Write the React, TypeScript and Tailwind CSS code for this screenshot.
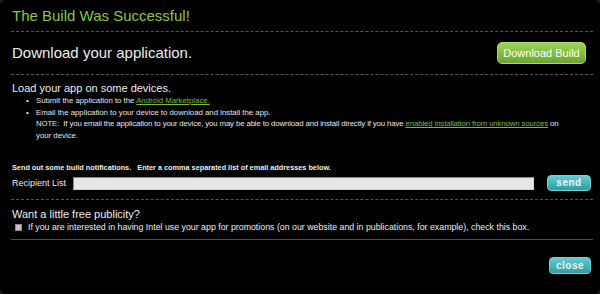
import React from 'react';

const font = { fontFamily: '"Liberation Sans", Arial, sans-serif' };

const Rule = ({ solid = false }: { solid?: boolean }) => (
  <div className={`h-0 border-t ${solid ? 'border-solid border-[#4d4d4d]' : 'border-dashed border-[#555]'}`} />
);

export default function App() {
  return (
    <div className="w-[600px] h-[294px] bg-[#1c1c1c]" style={font}>
      <div className="h-full bg-black rounded-[6px] pl-[11px] pr-[7px] text-[#ededed]">
        {/* Title */}
        <div className="h-[31px] pt-[7px] pl-[1px] text-[15px] leading-[18px] text-[#8dc63f]">
          The Build Was Successful!
        </div>
        <Rule />

        {/* Download */}
        <div className="h-[42px] flex items-center justify-between pl-[1px]">
          <span className="text-[15px] leading-[18px]">Download your application.</span>
          <button className="mr-[7px] h-[22px] w-[89px] rounded-[5px] border border-[#a9d874] bg-linear-to-b from-[#9ed35b] to-[#6ba52c] text-[11px] text-white">
            Download Build
          </button>
        </div>
        <Rule />

        {/* Devices */}
        <div className="pt-[6px] pl-[1px]">
          <div className="text-[11px] leading-[14px]">Load your app on some devices.</div>
          <ul className="pl-[14px] text-[7.8px] leading-[11.5px] text-[#e6e6e6] whitespace-nowrap">
            <li className="flex">
              <span className="w-[10px] shrink-0">•</span>
              <span>
                Submit the application to the{' '}
                <a className="text-[#7fb833] underline">Android Marketplace.</a>
              </span>
            </li>
            <li className="flex">
              <span className="w-[10px] shrink-0">•</span>
              <div>
                <div>Email the application to your device to download and install the app.</div>
                <div className="tracking-[-0.12px]">
                  NOTE:&nbsp; If you email the application to your device, you may be able to download and install
                  directly if you have{' '}
                  <a className="text-[#7fb833] underline">enabled installation from unknown sources</a> on
                </div>
                <div>your device.</div>
              </div>
            </li>
          </ul>
        </div>

        {/* Notifications */}
        <div className="mt-[22px] pl-[1px] text-[7.3px] leading-[10px] font-bold">
          Send out some build notifications.&nbsp;&nbsp; Enter a comma separated list of email addresses below.
        </div>
        <div className="h-[18px] mt-[1px] flex items-center pl-[1px]">
          <span className="w-[61px] text-[9px] leading-[12px]">Recipient List</span>
          <div className="w-[461px] h-[13px] bg-[#e6e6e6] border border-[#8a8a8a] border-b-[#cfcfcf] border-r-[#cfcfcf]" />
          <button className="ml-[13px] h-[16px] w-[44px] rounded-[4px] border border-[#72d3d6] bg-linear-to-b from-[#61cdd0] to-[#2b9ea3] text-[10px] font-bold tracking-[0.5px] leading-none text-[#f4f4f4]">
            send
          </button>
        </div>
        <div className="mt-[7px]">
          <Rule />
        </div>

        {/* Publicity */}
        <div className="pt-[7px] pl-[1px]">
          <div className="text-[11px] leading-[14px]">Want a little free publicity?</div>
          <div className="flex items-center h-[12px]">
            <span className="ml-[3px] mr-[6px] w-[7px] h-[7px] bg-[#c4c4c4] border border-[#8c8c8c]" />
            <span className="text-[8.8px] leading-[12px] whitespace-nowrap">
              If you are interested in having Intel use your app for promotions (on our website and in publications, for
              example), check this box.
            </span>
          </div>
        </div>
        <div className="mt-[6px]">
          <Rule solid />
        </div>

        {/* Close */}
        <div className="mt-[17px] flex justify-end">
          <button className="mr-[2px] h-[17px] w-[42px] rounded-[4px] border border-[#72d3d6] bg-linear-to-b from-[#61cdd0] to-[#2b9ea3] text-[10px] font-bold tracking-[0.5px] leading-none text-[#f4f4f4]">
            close
          </button>
        </div>
      </div>
    </div>
  );
}
